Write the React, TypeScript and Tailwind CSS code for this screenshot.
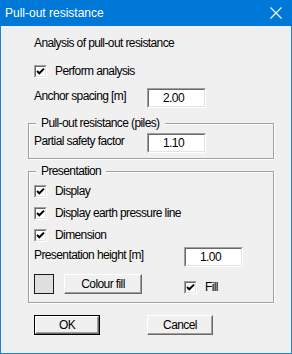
import React from "react";

const CheckBox = () => (
  <span className="flex w-[13px] h-[13px] shrink-0 border border-t-[#a0a0a0] border-l-[#a0a0a0] border-r-white border-b-white">
    <span className="flex flex-1 items-center justify-center bg-white border border-t-[#696969] border-l-[#696969] border-r-[#e3e3e3] border-b-[#e3e3e3]">
      <svg width="9" height="9" viewBox="0 0 9 9">
        <polyline points="1,4 3.3,6.3 8,1.6" fill="none" stroke="#000" strokeWidth="2" />
      </svg>
    </span>
  </span>
);

const Field = ({ value }: { value: string }) => (
  <div className="flex w-[59px] h-[20px] border border-t-[#a0a0a0] border-l-[#a0a0a0] border-r-white border-b-white">
    <div className="flex flex-1 items-center bg-white pl-[14px] leading-[16px] border border-t-[#696969] border-l-[#696969] border-r-[#e3e3e3] border-b-[#e3e3e3]">
      {value}
    </div>
  </div>
);

const Btn = ({ label, w, isDefault }: { label: string; w: string; isDefault?: boolean }) => (
  <div className={`${w} h-[20px] flex ${isDefault ? "border border-black" : ""}`}>
    <div className="flex flex-1 items-center justify-center leading-[14px] bg-[#f0f0f0] border border-t-white border-l-white border-r-[#696969] border-b-[#696969] shadow-[inset_-1px_-1px_0_#a0a0a0]">
      {label}
    </div>
  </div>
);

const CheckRow = ({ label, className = "" }: { label: string; className?: string }) => (
  <div className={`flex items-center h-[13px] ${className}`}>
    <CheckBox />
    <span className="ml-[8px] leading-[13px]">{label}</span>
  </div>
);

const Group = ({ title, className = "", children }: { title: string; className?: string; children: React.ReactNode }) => (
  <div className={`relative ml-[27px] w-[246px] border border-[#a0a0a0] shadow-[1px_1px_0_#fff,inset_1px_1px_0_#fff] pl-[5px] ${className}`}>
    <span className="absolute left-[7px] top-[-8px] px-[5px] bg-[#f0f0f0] leading-[14px]">{title}</span>
    {children}
  </div>
);

export default function App() {
  return (
    <div className="w-[292px] h-[354px] flex flex-col bg-[#f0f0f0] border-x border-b border-[#1883d7] text-[12px] tracking-[-0.6px] text-black font-['Liberation_Sans',Arial,sans-serif]">
      <div className="h-[26px] -mx-px flex items-center justify-between bg-[#0078d7] text-white pl-[5px] pr-[10px] tracking-normal">
        <span className="leading-[14px]">Pull-out resistance</span>
        <svg width="12" height="12" viewBox="0 0 12 12">
          <path d="M0.5 0.5 L11.5 11.5 M11.5 0.5 L0.5 11.5" stroke="#fff" strokeWidth="1.1" />
        </svg>
      </div>

      <div className="pl-[33px]">
        <div className="mt-[10px] leading-[14px]">Analysis of pull-out resistance</div>
        <CheckRow label="Perform analysis" className="mt-[15px]" />
        <div className="mt-[10px] flex items-start">
          <span className="w-[113px] leading-[16px]">Anchor spacing [m]</span>
          <Field value="2.00" />
        </div>
      </div>

      <Group title="Pull-out resistance (piles)" className="mt-[15px] pt-[9px] pb-[5px]">
        <div className="flex items-start">
          <span className="w-[113px] leading-[16px]">Partial safety factor</span>
          <Field value="1.10" />
        </div>
      </Group>

      <Group title="Presentation" className="mt-[12px] pt-[13px] pb-[8px]">
        <CheckRow label="Display" />
        <CheckRow label="Display earth pressure line" className="mt-[9px]" />
        <CheckRow label="Dimension" className="mt-[9px]" />
        <div className="mt-[5px] flex items-start">
          <span className="w-[150px] leading-[16px]">Presentation height [m]</span>
          <Field value="1.00" />
        </div>
        <div className="mt-[7px] flex items-start h-[20px]">
          <div className="w-[20px] h-[20px] border border-[#1a1a1a] bg-[#dfdfdf]" />
          <div className="ml-[10px]">
            <Btn label="Colour fill" w="w-[78px]" />
          </div>
          <CheckRow label="Fill" className="ml-[42px] mt-[7px]" />
        </div>
      </Group>

      <div className="mt-[12px] pl-[33px] flex">
        <Btn label="OK" w="w-[66px]" isDefault />
        <div className="ml-[47px]">
          <Btn label="Cancel" w="w-[66px]" />
        </div>
      </div>
    </div>
  );
}
